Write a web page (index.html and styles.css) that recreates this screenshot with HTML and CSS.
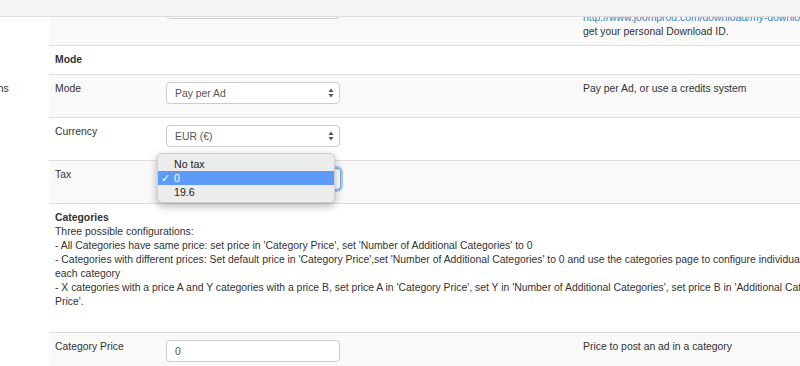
FILE: index.html
```html
<!DOCTYPE html>
<html lang="en">
<head>
    <meta charset="UTF-8">
    <title>Options</title>
    <link rel="stylesheet" href="styles.css">
</head>
<body>

    <div class="topbar"></div>

    <div class="page">
        <div class="sidebar">
            <span class="side-link">Options</span>
        </div>

        <table class="config">
            <colgroup>
                <col class="col-label">
                <col class="col-field">
                <col class="col-desc">
            </colgroup>
            <tbody>
                <tr class="odd">
                    <td>Download ID</td>
                    <td><div class="input"></div></td>
                    <td>Your Download ID is required for updates. Go to<br>
                        <a href="#">http://www.joomprod.com/download/my-download-id.html</a> to<br>
                        get your personal Download ID.</td>
                </tr>
                <tr class="head">
                    <td colspan="3"><b>Mode</b></td>
                </tr>
                <tr class="odd">
                    <td>Mode</td>
                    <td>
                        <div class="select"><span>Pay per Ad</span>
                            <svg width="6" height="10" viewBox="0 0 6 10"><path d="M3 0.5L5.5 4H0.5z M3 9.5L5.5 6H0.5z" fill="#555"/></svg>
                        </div>
                    </td>
                    <td>Pay per Ad, or use a credits system</td>
                </tr>
                <tr>
                    <td>Currency</td>
                    <td>
                        <div class="select"><span>EUR (€)</span>
                            <svg width="6" height="10" viewBox="0 0 6 10"><path d="M3 0.5L5.5 4H0.5z M3 9.5L5.5 6H0.5z" fill="#555"/></svg>
                        </div>
                    </td>
                    <td></td>
                </tr>
                <tr class="odd">
                    <td>Tax</td>
                    <td>
                        <div class="select focus"><span>0</span>
                            <svg width="6" height="10" viewBox="0 0 6 10"><path d="M3 0.5L5.5 4H0.5z M3 9.5L5.5 6H0.5z" fill="#555"/></svg>
                            <ul class="popup">
                                <li>No tax</li>
                                <li class="current"><span class="check">✓</span>0</li>
                                <li>19.6</li>
                            </ul>
                        </div>
                    </td>
                    <td></td>
                </tr>
                <tr>
                    <td colspan="3">
                        <div class="help">
                            <b>Categories</b><br>
                            Three possible configurations:<br>
                            - All Categories have same price: set price in 'Category Price', set 'Number of Additional Categories' to 0<br>
                            - Categories with different prices: Set default price in 'Category Price',set 'Number of Additional Categories' to 0 and use the categories page to configure individual price for each category<br>
                            - X categories with a price A and Y categories with a price B, set price A in 'Category Price', set Y in 'Number of Additional Categories', set price B in 'Additional Category Price'.
                        </div>
                    </td>
                </tr>
                <tr class="odd">
                    <td>Category Price</td>
                    <td><div class="input">0</div></td>
                    <td>Price to post an ad in a category</td>
                </tr>
            </tbody>
        </table>
    </div>

</body>
</html>
```

FILE: styles.css
```css
body {
    margin: 0;
    font-family: "Liberation Sans", Arial, sans-serif;
    font-size: 10.4px;
    line-height: 14px;
    color: #333;
    background: #fff;
    overflow: hidden;
}

.topbar {
    position: fixed;
    top: 0;
    left: 0;
    right: 0;
    height: 16px;
    background: #f5f5f5;
    border-bottom: 1px solid #ddd;
    z-index: 5;
}

.page {
    display: flex;
    margin-top: -11px;
}

.sidebar {
    width: 49px;
    flex-shrink: 0;
    padding-top: 93px;
    overflow: hidden;
}

.side-link {
    display: block;
    margin-left: -27px;
    white-space: nowrap;
}

.config {
    border-collapse: collapse;
    table-layout: fixed;
    width: 815px;
    flex-shrink: 0;
}

.col-label { width: 111px; }
.col-field { width: 417px; }

.config td {
    border-top: 1px solid #ddd;
    padding: 7px 6px 6px;
    vertical-align: top;
    white-space: nowrap;
}

.config tr.odd td {
    background: #f9f9f9;
}

.config tr.head td {
    padding-bottom: 7px;
}

.help {
    white-space: normal;
    margin-bottom: 17px;
}

a {
    color: #3a7ec2;
    text-decoration: none;
}

.input,
.select {
    box-sizing: border-box;
    width: 174px;
    height: 22px;
    margin-bottom: 7px;
    padding: 4px 8px;
    background: #fff;
    border: 1px solid #ccc;
    border-radius: 4px;
    color: #555;
    font-size: 10.4px;
    line-height: 13px;
}

.select {
    position: relative;
    display: flex;
    align-items: center;
    justify-content: space-between;
    padding-right: 5px;
}

.select.focus {
    width: 175px;
    border-color: #7aa7e6;
    box-shadow: 0 0 0 2px #a9c8f2;
}

.popup {
    position: absolute;
    left: -10px;
    top: -16px;
    width: 176px;
    margin: 0;
    padding: 3px 0;
    list-style: none;
    background: #ececec;
    border: 1px solid #cfcfcf;
    border-radius: 5px;
    box-shadow: 0 3px 8px rgba(0, 0, 0, 0.3);
    color: #222;
    font-size: 10.6px;
    line-height: 14px;
}

.popup li {
    position: relative;
    padding-left: 16px;
}

.popup li.current {
    background: #5e9af7;
    color: #fff;
}

.check {
    position: absolute;
    left: 3px;
}
```
